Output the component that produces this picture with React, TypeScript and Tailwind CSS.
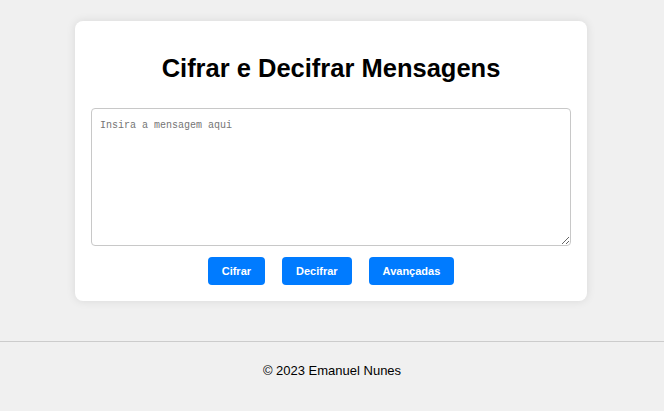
import React from "react";

export default function App() {
  return (
    <div className="min-h-[411px] bg-[#f0f0f0] pt-[21px]" style={{ fontFamily: '"Liberation Sans", Arial, sans-serif' }}>
      <div className="mx-auto w-[512px] -translate-x-[1px] rounded-[8px] bg-white p-[16px] shadow-[0_0_10px_rgba(0,0,0,0.1)]">
        <h1 className="mt-[17px] mb-[26px] text-center text-[25.5px] leading-[28px] font-bold text-black">
          Cifrar e Decifrar Mensagens
        </h1>
        <textarea
          className="block h-[138px] w-[480px] resize-y rounded-[4px] border border-[#c8c8c8] px-[8px] pt-[10px] pb-[8px] text-[10px] leading-[13px] text-black placeholder:text-[#757575] outline-none"
          style={{ fontFamily: '"Liberation Mono", "DejaVu Sans Mono", monospace' }}
          placeholder="Insira a mensagem aqui"
        />
        <div className="mt-[11px] flex justify-center gap-[17px]">
          <button className="h-[28px] rounded-[4px] bg-[#007bff] px-[14px] text-[11px] font-bold text-white">Cifrar</button>
          <button className="h-[28px] rounded-[4px] bg-[#007bff] px-[14px] text-[11px] font-bold text-white">Decifrar</button>
          <button className="h-[28px] rounded-[4px] bg-[#007bff] px-[14px] text-[11px] font-bold text-white">Avançadas</button>
        </div>
      </div>
      <footer className="mt-[40px] border-t border-[#cccccc] pt-[21px] pb-[20px] text-center text-[13px] leading-[16px] text-black">
        © 2023 Emanuel Nunes
      </footer>
    </div>
  );
}
